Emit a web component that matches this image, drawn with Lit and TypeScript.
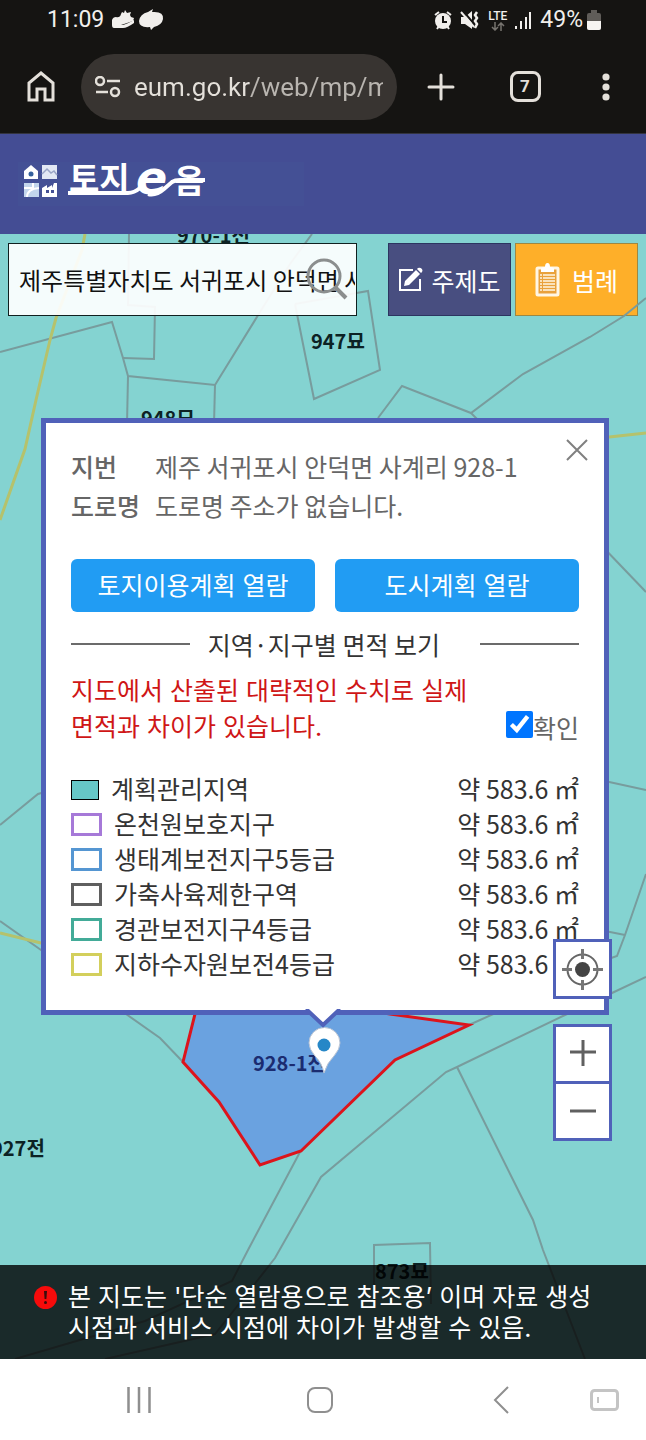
import { css, html, LitElement, svg } from "lit";
import { customElement, property, state } from "lit/decorators.js";
import { classMap } from "lit/directives/class-map.js";

interface ZoneArea {
  name: string;
  swatch: "filled" | "purple" | "blue" | "gray" | "green" | "yellow";
  area: string;
}

const ZONES: ZoneArea[] = [
  { name: "계획관리지역", swatch: "filled", area: "583.6" },
  { name: "온천원보호지구", swatch: "purple", area: "583.6" },
  { name: "생태계보전지구5등급", swatch: "blue", area: "583.6" },
  { name: "가축사육제한구역", swatch: "gray", area: "583.6" },
  { name: "경관보전지구4등급", swatch: "green", area: "583.6" },
  { name: "지하수자원보전4등급", swatch: "yellow", area: "583.6" },
];

// Parcel borders, in map canvas units
const PARCELS = [
  "0,118 112,88 123,124 128,142 215,151 260,78 290,30 312,0",
  "128,142 127,190",
  "215,151 214,190",
  "129,0 128,71 155,73 154,125 123,124",
  "295,70 368,57 380,136 314,165 295,70",
  "646,64 624,82 590,103 523,140 471,179 402,152 378,184",
  "471,179 480,188",
  "600,310 646,358",
  "600,546 646,556",
  "646,640 625,701 617,722 600,728",
  "600,696 625,701",
  "0,591 38,560 45,558",
  "0,687 41,716 126,780 160,804 183,828",
  "646,743 612,759 565,781 457,833 446,838 321,943 275,1024 250,1056 215,1100 105,1125",
  "300,918 248,1016 232,1047 145,1087 15,1125",
  "457,833 533,986 543,1016 585,1125",
  "500,777 469,791",
  "374,1070 374,1011 430,1009 431,1070",
];

const ROADS = [
  "85,0 82,16 56,84 50,106 36,166 25,215 0,286",
  "600,204 646,199",
  "0,699 45,710",
];

const LABELS = [
  { x: 177, y: 9, text: "970-1전" },
  { x: 311, y: 115, text: "947묘" },
  { x: 141, y: 192, text: "948묘" },
  { x: -9, y: 922, text: "927전" },
  { x: 375, y: 1045, text: "873묘" },
];

@customElement("phone-status-bar")
export class PhoneStatusBar extends LitElement {
  @property({ type: String })
  time = "";

  @property({ type: Number })
  battery = 100;

  static styles = css`
    :host {
      display: flex;
      align-items: center;
      justify-content: space-between;
      height: 40px;
      padding: 0 45px 0 47px;
      background: #151412;
      color: #f1efec;
      font: 23px/40px Roboto, sans-serif;
    }

    .group {
      display: flex;
      align-items: center;
      gap: 8px;
    }

    .level {
      display: flex;
      align-items: center;
      gap: 4px;
    }

    .network {
      display: flex;
      flex-direction: column;
      align-items: center;
      font: 500 12px/12px Roboto, sans-serif;
    }

    svg {
      display: block;
    }
  `;

  render() {
    return html`
      <div class="group">
        <span>${this.time}</span>
        <svg width="54" height="24" viewBox="0 0 54 24" fill="#f1efec">
          <path
            d="M0 12q1-3 4-3 4 1 5-3l1-2 2 1 1-3 2 3 4-1-1 3 1 2 3 1-1 3-9 3-3 1H0z"
          />
          <path d="M0 17h11q4-1 11-5v3q-7 5-11 5H2q-2 0-2-3z" />
          <path
            d="M41 1l-1 3q12-1 11 7-1 6-9 8l-3 3-1-3q-11 1-11-6 1-7 9-9z"
          />
        </svg>
      </div>
      <div class="group">
        <svg width="18" height="20" viewBox="0 0 18 20">
          <circle cx="9" cy="11" r="8" fill="#f1efec" />
          <path
            d="M9 6v6h4"
            fill="none"
            stroke="#151412"
            stroke-width="2"
          />
          <path
            d="M1 5l4-3M17 5l-4-3M3 19l2-3M15 19l-2-3"
            stroke="#f1efec"
            stroke-width="2"
          />
        </svg>
        <svg width="20" height="20" viewBox="0 0 20 20">
          <path d="M1 7h4l7-6v18l-7-5H1z" fill="#f1efec" />
          <path d="M3 1l12 14" stroke="#151412" stroke-width="2" />
          <path d="M1 2l13 15" stroke="#f1efec" stroke-width="2" />
          <path
            d="M17 2l-2 3 2 3-2 3 2 3-2 4"
            fill="none"
            stroke="#f1efec"
            stroke-width="2.500"
          />
        </svg>
        <span class="network">
          LTE
          <svg width="14" height="9" viewBox="0 0 14 9">
            <path
              d="M4 0v8M1 5l3 3 3-3M10 9V1M7 4l3-3 3 3"
              fill="none"
              stroke="#77746f"
              stroke-width="1.5"
            />
          </svg>
        </span>
        <svg width="17" height="18" viewBox="0 0 17 18" fill="#f1efec">
          <rect x="0" y="15" width="2" height="3" />
          <rect x="5" y="10" width="2" height="8" />
          <rect x="10" y="6" width="2" height="12" />
          <rect x="14" y="1" width="2" height="17" />
        </svg>
        <span class="level">
          <span>${this.battery}%</span>
          <svg width="14" height="20" viewBox="0 0 14 20">
            <path
              d="M4 0h6v3h2q2 0 2 2v13q0 2-2 2H2q-2 0-2-2V5q0-2 2-2h2z"
              fill="#5f5c58"
            />
            <path d="M0 11h14v7q0 2-2 2H2q-2 0-2-2z" fill="#f7f5f2" />
          </svg>
        </span>
      </div>
    `;
  }
}

@customElement("browser-bar")
export class BrowserBar extends LitElement {
  @property({ type: String })
  url = "";

  @property({ type: Number })
  tabs = 1;

  static styles = css`
    :host {
      display: grid;
      grid-template-columns: 81px minmax(0, 1fr) 88px 80px 81px;
      align-items: center;
      height: 93px;
      background: #151412;
      border-bottom: 1px solid #33343f;
    }

    button {
      display: flex;
      justify-content: center;
      padding: 0;
      border: 0;
      background: none;
      color: #e4e0da;
    }

    .address {
      display: flex;
      align-items: center;
      gap: 13px;
      height: 66px;
      padding: 0 14px;
      border-radius: 33px;
      background: #383431;
    }

    .address svg {
      flex: none;
    }

    input {
      flex: 1;
      min-width: 0;
      padding: 0;
      border: 0;
      outline: 0;
      font: 26px/40px Roboto, sans-serif;
      color: transparent;
      background: linear-gradient(to right, #e4e0da 116px, #b9b5b0 117px);
      background-clip: text;
      -webkit-background-clip: text;
    }

    .tabs {
      box-sizing: border-box;
      width: 31px;
      height: 31px;
      border: 3px solid #e4e0da;
      border-radius: 8px;
      font: 700 17px/25px Roboto, sans-serif;
      text-align: center;
    }
  `;

  render() {
    return html`
      <button aria-label="홈">
        <svg width="28" height="31" viewBox="0 0 28 31">
          <path
            d="M2 29V12L14 2l12 10v17h-8V18h-8v11z"
            fill="none"
            stroke="currentColor"
            stroke-width="3"
          />
        </svg>
      </button>
      <div class="address">
        <svg
          width="26"
          height="22"
          viewBox="0 0 26 22"
          fill="none"
          stroke="#e4e0da"
          stroke-width="2.5"
        >
          <circle cx="5" cy="5" r="4" />
          <path d="M12 5h13M1 16h12" />
          <circle cx="20" cy="16" r="4" />
        </svg>
        <input type="text" aria-label="주소" .value=${this.url} />
      </div>
      <button aria-label="새 탭">
        <svg width="28" height="28" viewBox="0 0 28 28">
          <path
            d="M14 2v24M2 14h24"
            stroke="currentColor"
            stroke-width="3"
            stroke-linecap="round"
          />
        </svg>
      </button>
      <button aria-label="탭 목록">
        <span class="tabs">${this.tabs}</span>
      </button>
      <button aria-label="메뉴">
        <svg width="8" height="28" viewBox="0 0 8 28" fill="currentColor">
          <circle cx="4" cy="4" r="3.6" />
          <circle cx="4" cy="14" r="3.6" />
          <circle cx="4" cy="24" r="3.6" />
        </svg>
      </button>
    `;
  }
}

@customElement("land-popup")
export class LandPopup extends LitElement {
  @property({ attribute: false })
  zones: ZoneArea[] = [];

  @state()
  private _confirmed = true;

  static styles = css`
    :host {
      display: block;
      position: relative;
      padding: 24px 25px 29px;
      border: 5px solid #5061b9;
      background: #fff;
      color: #333;
      font: 25px/36px "Noto Sans CJK KR", sans-serif;
    }

    dl {
      display: grid;
      grid-template-columns: 84px 1fr;
      margin: 0 0 34px;
      line-height: 39px;
      color: #666;
    }

    dt {
      font-weight: 500;
    }

    dd {
      margin: 0;
    }

    .close {
      position: absolute;
      top: 15px;
      right: 15px;
      padding: 0;
      border: 0;
      background: none;
    }

    svg {
      display: block;
    }

    .actions {
      display: grid;
      grid-template-columns: 1fr 1fr;
      gap: 20px;
    }

    .actions button {
      height: 53px;
      padding: 0;
      border: 0;
      border-radius: 6px;
      background: #219cf3;
      color: #fff;
      font: inherit;
    }

    .actions button,
    .warning {
      font-family: Inter, "Noto Sans CJK KR", sans-serif;
    }

    h2 {
      display: flex;
      align-items: center;
      margin: 14px 0 11px;
      font: inherit;
    }

    h2::before,
    h2::after {
      content: "";
      flex: 6;
      height: 2px;
      background: #6b6b6b;
    }

    h2::before {
      margin-right: 18px;
    }

    h2::after {
      flex: 5;
      margin-left: 40px;
    }

    .notice {
      display: flex;
      align-items: flex-end;
      justify-content: space-between;
      margin-bottom: 26px;
    }

    .warning {
      flex: 1;
      margin: 0;
      color: #cf1616;
      word-break: keep-all;
    }

    label {
      display: flex;
      align-items: center;
      color: #666;
    }

    input {
      width: 27px;
      height: 27px;
      margin: 0 0 6px;
      accent-color: #0075ff;
    }

    table {
      width: 100%;
      border-collapse: collapse;
      line-height: 35px;
    }

    th,
    td {
      padding: 0;
      font-weight: 400;
      text-align: right;
    }

    .zone {
      display: flex;
      align-items: center;
      gap: 12px;
    }

    .swatch {
      box-sizing: border-box;
      width: 31px;
      height: 23px;
      margin-top: 2px;
      border: 3px solid;
    }

    .filled {
      width: 28px;
      height: 20px;
      border: 1px solid #000;
      background: #66c7c7;
    }

    .purple {
      border-color: #a679d8;
    }

    .blue {
      border-color: #5596d2;
    }

    .gray {
      border-color: #5f5f5f;
    }

    .green {
      border-color: #43ab98;
    }

    .yellow {
      border-color: #d3cf5c;
    }

    .pointer {
      position: absolute;
      top: 100%;
      left: 50%;
      margin: -1px 0 0 -22px;
    }
  `;

  render() {
    return html`
      <button class="close" aria-label="닫기" @click=${this._close}>
        <svg width="24" height="24" viewBox="0 0 24 24">
          <path
            d="M2 2l20 20M22 2L2 22"
            stroke="#808080"
            stroke-width="2"
          />
        </svg>
      </button>
      <dl>
        <dt>지번</dt>
        <dd>제주 서귀포시 안덕면 사계리 928-1</dd>
        <dt>도로명</dt>
        <dd>도로명 주소가 없습니다.</dd>
      </dl>
      <div class="actions">
        <button>토지이용계획 열람</button>
        <button>도시계획 열람</button>
      </div>
      <h2>지역·지구별 면적 보기</h2>
      <div class="notice">
        <p class="warning">
          지도에서 산출된 대략적인 수치로 실제 면적과 차이가 있습니다.
        </p>
        <label>
          <input
            type="checkbox"
            .checked=${this._confirmed}
            @change=${this._toggle}
          />확인
        </label>
      </div>
      <table>
        ${this.zones.map(
          (zone) => html`
            <tr>
              <th scope="row">
                <span class="zone">
                  <span
                    class=${classMap({ swatch: true, [zone.swatch]: true })}
                  ></span>
                  ${zone.name}
                </span>
              </th>
              <td>약 ${zone.area} ㎡</td>
            </tr>
          `,
        )}
      </table>
      <svg class="pointer" width="40" height="20" viewBox="0 0 40 20">
        <path d="M4 0L20 16 36 0z" fill="#fff" />
        <path
          d="M3 0L20 16 37 0"
          fill="none"
          stroke="#5061b9"
          stroke-width="4"
        />
      </svg>
    `;
  }

  private _toggle(e: Event) {
    this._confirmed = (e.target as HTMLInputElement).checked;
  }

  private _close() {
    this.dispatchEvent(
      new CustomEvent("popup-close", { bubbles: true, composed: true }),
    );
  }
}

@customElement("app-root")
export class AppRoot extends LitElement {
  @state()
  private _popupOpen = true;

  static styles = css`
    :host {
      display: flex;
      flex-direction: column;
      min-height: 100vh;
      background: #fff;
      font: 25px/36px "Noto Sans CJK KR", sans-serif;
    }

    button {
      padding: 0;
      border: 0;
      background: none;
      font: inherit;
    }

    svg {
      display: block;
    }

    header {
      display: flex;
      align-items: center;
      height: 100px;
      padding: 0 18px;
      background: #444d94;
    }

    .logo {
      overflow: visible;
    }

    .logo text {
      font: 700 33px "Noto Sans CJK KR", sans-serif;
      fill: #fff;
    }

    .logo .e {
      font: italic 700 46px "DejaVu Sans", sans-serif;
    }

    main {
      position: relative;
      flex: 1;
      display: flex;
      flex-direction: column;
      justify-content: space-between;
      overflow: hidden;
      background: #84d3d1;
    }

    .map {
      position: absolute;
      inset: 0;
      width: 100%;
      height: 100%;
    }

    .map text {
      font: 700 20px "Noto Sans CJK KR", sans-serif;
      fill: #0c2224;
    }

    .map .selected {
      fill: #1b2c70;
    }

    .toolbar {
      display: flex;
      gap: 4px;
      padding: 9px 8px 0;
      margin-bottom: 102px;
    }

    .search {
      position: relative;
      flex: 1;
      min-width: 0;
      margin-right: 27px;
    }

    .search input {
      box-sizing: border-box;
      width: 100%;
      height: 73px;
      padding: 0 1px 0 10px;
      border: 1px solid #10201f;
      border-radius: 0;
      outline: 0;
      background: rgba(255, 255, 255, 0.92);
      color: #111;
      font: 24px/36px "Noto Sans CJK KR", sans-serif;
    }

    .search button {
      position: absolute;
      top: 14px;
      right: 8px;
    }

    .tool {
      display: flex;
      align-items: center;
      justify-content: center;
      gap: 8px;
      width: 123px;
      height: 73px;
      border: 1px solid #2c3560;
      background: #484e80;
      color: #fff;
    }

    .tool.legend {
      gap: 12px;
      border-color: #9c8843;
      background: #feaf29;
    }

    land-popup {
      margin: 0 37px 0 41px;
    }

    .controls {
      position: absolute;
      right: 34px;
      bottom: 218px;
      display: flex;
      flex-direction: column;
      gap: 25px;
    }

    .control {
      display: flex;
      flex-direction: column;
      gap: 3px;
      border: 3px solid #5061b9;
      background: #5061b9;
    }

    .control button {
      display: flex;
      align-items: center;
      justify-content: center;
      width: 53px;
      height: 54px;
      background: #fff;
    }

    .disclaimer {
      position: relative;
      display: flex;
      gap: 11px;
      margin-top: auto;
      padding: 17px 34px 15px;
      background: rgba(0, 0, 0, 0.8);
      color: #fff;
      font: 25px/31px Inter, "Noto Sans CJK KR", sans-serif;
    }

    .disclaimer svg {
      flex: none;
      margin-top: 4px;
    }

    .disclaimer p {
      margin: 0;
      word-break: keep-all;
    }

    nav {
      display: flex;
      align-items: center;
      justify-content: space-between;
      height: 81px;
      padding: 0 12px 0 109px;
    }

    nav button {
      display: flex;
      justify-content: center;
      width: 60px;
    }

    nav button:last-child {
      margin-left: -78px;
    }
  `;

  render() {
    return html`
      <phone-status-bar time="11:09" .battery=${49}></phone-status-bar>
      <browser-bar url="eum.go.kr/web/mp/mpMapDet.jsp" .tabs=${7}></browser-bar>
      <header>${this._renderLogo()}</header>
      <main>
        ${this._renderMap()}
        <div class="toolbar">
          <div class="search">
            <input
              type="text"
              aria-label="주소 검색"
              value="제주특별자치도 서귀포시 안덕면 사계리 928-1"
            />
            <button aria-label="검색">
              <svg width="44" height="44" viewBox="0 0 44 44">
                <g fill="none" stroke="#8b8e8e">
                  <circle cx="19" cy="19" r="16" stroke-width="3" />
                  <path d="M30 30l11 11" stroke-width="4" />
                </g>
              </svg>
            </button>
          </div>
          <button class="tool">
            <svg width="25" height="25" viewBox="0 0 25 25">
              <path
                d="M15 3H2v20h20V12"
                fill="none"
                stroke="#fff"
                stroke-width="2"
              />
              <path
                d="M6 19l1-5L18 3l4 4L11 18zM19 2l1-1q2-1 4 1 1 2 0 3l-1 1z"
                fill="#fff"
              />
            </svg>
            주제도
          </button>
          <button class="tool legend">
            <svg width="25" height="34" viewBox="0 0 25 34">
              <rect
                x="2"
                y="5"
                width="21"
                height="27"
                rx="1"
                fill="#e9a13c"
                stroke="#fff6e4"
                stroke-width="3"
              />
              <path d="M6 9V6q0-2 4-2 0-4 2.500-4T15 4q4 0 4 2v3z" fill="#fff" />
              <path
                d="M5 12h2M5 15h2M5 18h2M5 21h2M5 24h2M5 27h2M8 12h12M8 15h12M8 18h12M8 21h12M8 24h12M8 27h12"
                stroke="#fff6e4"
                stroke-width="1.500"
              />
            </svg>
            범례
          </button>
        </div>
        ${this._popupOpen
          ? html`<land-popup
              .zones=${ZONES}
              @popup-close=${this._closePopup}
            ></land-popup>`
          : ""}
        <div class="disclaimer">
          <svg width="23" height="23" viewBox="0 0 23 23">
            <circle cx="11.5" cy="11.5" r="11.5" fill="#f60b0b" />
            <path d="M10 5h3l-.6 8h-1.800z" fill="#3a0d0d" />
            <circle cx="11.5" cy="16.500" r="1.500" fill="#3a0d0d" />
          </svg>
          <p>
            본 지도는 '단순 열람용으로 참조용’ 이며 자료 생성 시점과 서비스
            시점에 차이가 발생할 수 있음.
          </p>
        </div>
        <div class="controls">
          <div class="control">
            <button aria-label="현재 위치">
              <svg width="41" height="41" viewBox="0 0 41 41">
                <circle
                  cx="20.5"
                  cy="20.5"
                  r="15"
                  fill="none"
                  stroke="#666"
                  stroke-width="2"
                />
                <path
                  d="M20.500 0v10M20.500 31v10M0 20.500h10M31 20.500h10"
                  stroke="#777"
                  stroke-width="3"
                />
                <circle cx="20.5" cy="20.5" r="7.500" fill="#444" />
              </svg>
            </button>
          </div>
          <div class="control">
            <button aria-label="확대">
              <svg width="28" height="28" viewBox="0 0 28 28">
                <path
                  d="M14 0v26M1 12h26"
                  stroke="#606060"
                  stroke-width="3"
                />
              </svg>
            </button>
            <button aria-label="축소">
              <svg width="28" height="28" viewBox="0 0 28 28">
                <path d="M1 14h26" stroke="#606060" stroke-width="3" />
              </svg>
            </button>
          </div>
        </div>
      </main>
      ${this._renderNav()}
    `;
  }

  private _renderLogo() {
    return html`
      <svg
        class="logo"
        width="286"
        height="44"
        viewBox="0 0 286 44"
        role="img"
        aria-label="토지e음"
      >
        <rect width="286" height="44" fill="#445095" />
        <g fill="#fff">
          <path d="M6 9l7-6 7 6v8H6z" />
          <rect x="24" y="3" width="15" height="14" fill="#e3e8f4" />
          <rect x="6" y="21" width="15" height="14" fill="#c3d6ec" />
          <path d="M24 35V26l5-3v3l5-3v3l2-5h3v14z" />
        </g>
        <circle cx="13" cy="12" r="2.500" fill="#35609c" />
        <path
          d="M24 12l5-5 4 4 3-2 3 4"
          fill="none"
          stroke="#9aa5c6"
          stroke-width="1.500"
        />
        <path
          d="M9 35q0-8 12-9M6 26h9v-5"
          fill="none"
          stroke="#fff"
          stroke-width="2"
        />
        <path d="M28 28h3v3h-3zM33 28h3v3h-3z" fill="#445095" />
        <text x="51" y="29">토지</text>
        <text class="e" x="118" y="32">e</text>
        <text x="156" y="31">음</text>
        <path
          d="M50 31h60q6 0 12-5M130 32q8 2 16-5l8-7q3-2 8-2h25"
          fill="none"
          stroke="#fff"
          stroke-width="4"
        />
      </svg>
    `;
  }

  private _renderMap() {
    return html`
      <svg
        class="map"
        viewBox="0 0 646 1125"
        preserveAspectRatio="xMidYMid slice"
      >
        <g fill="none" stroke="#789c9d" stroke-width="2">
          ${PARCELS.map((p) => svg`<polyline points=${p} />`)}
        </g>
        <g fill="none" stroke="#b5c26c" stroke-width="3">
          ${ROADS.map((p) => svg`<polyline points=${p} />`)}
        </g>
        <polygon
          points="200,760 183,828 219,868 260,931 301,917 395,826 469,791 390,780 300,765"
          fill="#6aa2e0"
          stroke="#dc141c"
          stroke-width="3"
        />
        ${LABELS.map(
          (l) => svg`<text x=${l.x} y=${l.y}>${l.text}</text>`,
        )}
        <text class="selected" x="253" y="837">928-1전</text>
        <path
          d="M324 839q-2-10-9-17-6-7-6-13a15 15 0 0 1 31 0q0 6-6 13-7 7-10 17z"
          fill="#fff"
          stroke="#b9c4d4"
        />
        <circle cx="324" cy="811" r="6.500" fill="#2687c7" />
      </svg>
    `;
  }

  private _renderNav() {
    return html`
      <nav>
        <button aria-label="최근 앱">
          <svg width="24" height="26" viewBox="0 0 24 26">
            <path
              d="M1.500 0v26M12 0v26M22.500 0v26"
              stroke="#8f8f8f"
              stroke-width="2.500"
            />
          </svg>
        </button>
        <button aria-label="홈 화면">
          <svg width="26" height="26" viewBox="0 0 26 26">
            <rect
              x="1"
              y="1"
              width="24"
              height="24"
              rx="7"
              fill="none"
              stroke="#8f8f8f"
              stroke-width="2"
            />
          </svg>
        </button>
        <button aria-label="뒤로">
          <svg width="16" height="28" viewBox="0 0 16 28">
            <path
              d="M15 1L2 14l13 13"
              fill="none"
              stroke="#8f8f8f"
              stroke-width="2"
            />
          </svg>
        </button>
        <button aria-label="키보드">
          <svg width="29" height="22" viewBox="0 0 29 22">
            <rect
              x="1.500"
              y="1.500"
              width="26"
              height="19"
              rx="3"
              fill="none"
              stroke="#c4c4c4"
              stroke-width="3"
            />
            <path d="M8 8v6" stroke="#c4c4c4" stroke-width="2" />
          </svg>
        </button>
      </nav>
    `;
  }

  private _closePopup() {
    this._popupOpen = false;
  }
}
